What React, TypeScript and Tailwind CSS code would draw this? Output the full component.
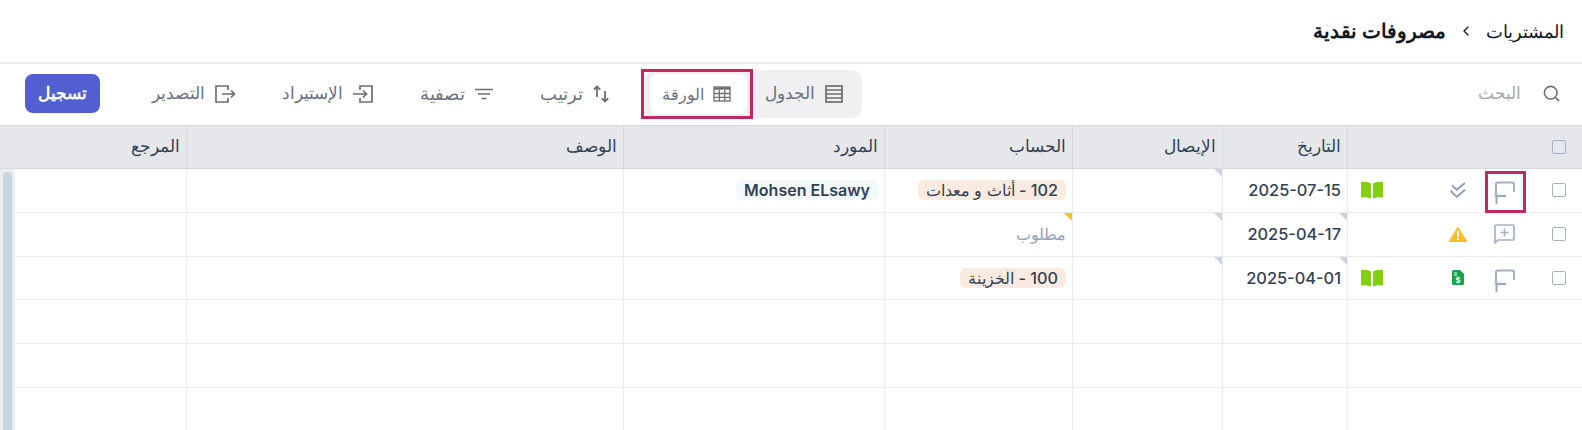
import { Search, ChevronLeft } from "lucide-react";

const cols = "grid grid-cols-[235px_125px_150px_188px_261px_437px_1fr]";
const headers = ["", "التاريخ", "الإيصال", "الحساب", "المورد", "الوصف", "المرجع"];

function Corner({ color = "border-t-[#cbd5e1]" }: { color?: string }) {
  return <span className={`absolute top-0 right-0 h-0 w-0 border-t-[8px] border-l-[8px] border-l-transparent ${color}`} />;
}

function Checkbox() {
  return <span className="block h-[14px] w-[14px] shrink-0 rounded-[2px] border-[1.5px] border-[#a3b1c6]" />;
}

function CommentIcon() {
  return (
    <svg className="mt-[6px]" width="21" height="24" viewBox="0 0 21 24" fill="none" stroke="#a3b1c6" strokeWidth="2">
      <path d="M2 15V3a1.500 1.500 0 0 1 1.500-1.500h15a1.500 1.500 0 0 1 1.500 1.500v8" />
      <path d="M2 15h10" strokeWidth="2.200" stroke="#9aa9bf" />
      <path d="M2.500 15v8" strokeWidth="2" stroke="#9aa9bf" />
      <path d="M0 15h1.500" stroke="#e5b5b5" strokeWidth="1.500" />
    </svg>
  );
}

function AddCommentIcon() {
  return (
    <svg width="21" height="20" viewBox="0 0 21 20" fill="none" stroke="#a3b1c6" strokeWidth="1.700">
      <path d="M1 19V2a1 1 0 0 1 1-1h17a1 1 0 0 1 1 1v13a1 1 0 0 1-1 1H4z" strokeLinejoin="round" />
      <path d="M10.500 4.500v8M6.500 8.500h8" />
    </svg>
  );
}

function BookIcon() {
  return (
    <svg width="24" height="18" viewBox="0 0 24 18" fill="#84cf12">
      <path d="M11 2.500C9 1 5 .5 1 1v15.500c4-.5 8 0 10 1.300z" />
      <path d="M13 2.500C15 1 19 .5 23 1v15.500c-4-.5-8 0-10 1.300z" />
    </svg>
  );
}

function DoubleCheck() {
  return (
    <svg width="16" height="16" viewBox="0 0 16 16" fill="none" stroke="#8a9bb8" strokeWidth="1.800">
      <path d="M2 3.300l4.700 4.400L15 1" />
      <path d="M.5 8.700l6.200 6.200L15 7.700" />
    </svg>
  );
}

function Warning() {
  return (
    <svg width="20" height="16" viewBox="0 0 20 16">
      <path d="M10 .5 19.600 16H.4z" fill="#fbbf24" />
      <rect x="9" y="5" width="2" height="6" fill="#fff" />
      <rect x="9" y="12" width="2" height="2" fill="#fff" />
    </svg>
  );
}

function MoneyDoc() {
  return (
    <svg width="12" height="15" viewBox="0 0 12 15">
      <path d="M1.500 0H8l4 4v9.500a1.500 1.500 0 0 1-1.500 1.500h-9A1.500 1.500 0 0 1 0 13.500v-12A1.500 1.500 0 0 1 1.500 0z" fill="#16a34a" />
      <text x="6" y="12.500" fontSize="7.500" fontWeight="700" textAnchor="middle" fill="#fff" fontFamily="Inter">$</text>
      <path d="M2 3h3M2 5h3" stroke="#fff" strokeWidth="1" />
    </svg>
  );
}

function RowsIcon() {
  return (
    <svg width="18" height="18" viewBox="0 0 18 18" fill="none" stroke="#6e6e6e" strokeWidth="1.700">
      <rect x="1" y="1" width="16" height="16" />
      <path d="M1 5h16M1 9h16M1 13h16" />
    </svg>
  );
}

function SheetIcon() {
  return (
    <svg width="18" height="16" viewBox="0 0 18 16" fill="none" stroke="#6e6e6e" strokeWidth="1.300">
      <rect x="1" y="1" width="16" height="14" />
      <path d="M1 2.500h16" strokeWidth="2.400" />
      <path d="M1 7.500h16M1 11.300h16M6.300 4v11M11.700 4v11" />
    </svg>
  );
}

function SortIcon() {
  return (
    <svg width="16" height="18" viewBox="0 0 16 18" fill="none" stroke="#6e6e6e" strokeWidth="1.800">
      <path d="M4 12V1.500M.8 4.700 4 1.500l3.200 3.200" />
      <path d="M12 6v10.500M8.800 13.300l3.200 3.200 3.200-3.200" />
    </svg>
  );
}

function ImportIcon() {
  return (
    <svg width="20" height="18" viewBox="0 0 20 18" fill="none" stroke="#6e6e6e" strokeWidth="1.700">
      <path d="M7 5V1h12v16H7v-4" />
      <path d="M0 9h13M10 5.500 13.500 9 10 12.500" />
    </svg>
  );
}

function ExportIcon() {
  return (
    <svg width="20" height="18" viewBox="0 0 20 18" fill="none" stroke="#6e6e6e" strokeWidth="1.700">
      <path d="M13 5V1H1v16h12v-4" />
      <path d="M7 9h12M16 5.500 19.500 9 16 12.500" />
    </svg>
  );
}

function Filter() {
  return (
    <svg width="18" height="12" viewBox="0 0 18 12" fill="none" stroke="#6e6e6e" strokeWidth="1.600">
      <path d="M0 1.500h18M3 6h12M6.500 10.500h5" />
    </svg>
  );
}

function Action({ icon, label, className }: { icon: React.ReactNode; label: string; className: string }) {
  return (
    <div className={`flex items-center gap-[10px] text-[#6b7280] ${className}`}>
      {icon}
      <span>{label}</span>
    </div>
  );
}

function Pill({ text, tone }: { text: string; tone: string }) {
  return <span className={`inline-block h-5 rounded-[6px] px-2 leading-5 text-[#334155] ${tone}`}>{text}</span>;
}

const rows = [
  { date: "2025-07-15", first: true, icons: [<CommentIcon />, <DoubleCheck />, <BookIcon />], account: "102 - أثاث و معدات", supplier: "Mohsen ELsawy" },
  { date: "2025-04-17", icons: [<AddCommentIcon />, <Warning />, null], required: true },
  { date: "2025-04-01", icons: [<CommentIcon />, <MoneyDoc />, <BookIcon />], account: "100 - الخزينة" },
  { date: "" },
  { date: "" },
  { date: "" },
];

export default function App() {
  return (
    <div dir="rtl" className="relative h-[430px] w-[1582px] overflow-hidden bg-white font-['Inter','Noto_Sans',sans-serif]">
      <div className="flex h-[62px] items-center gap-[12px] pr-[18px] text-[#111827]">
        <span className="text-[18px]">المشتريات</span>
        <ChevronLeft size={16} strokeWidth={2} />
        <span className="text-[20px] font-semibold">مصروفات نقدية</span>
      </div>

      <div className="flex h-[63px] items-center border-t-2 border-[#eceef2] pr-[21px] pb-[2px] pl-[25px]">
        <div className="flex w-[100px] shrink-0 items-center gap-[21px] text-[17px] text-[#a3a7ae]">
          <Search size={19} strokeWidth={2} className="text-[#6e6e6e]" />
          <span>البحث</span>
        </div>
        <div className="mr-[599px] flex h-[48px] w-[217px] items-center rounded-[10px] bg-[#f0f0f2] pr-[19px] pl-[5px]">
          <div className="flex w-[96px] items-center gap-[10px] text-[17px] text-[#6b7280]">
            <RowsIcon />
            <span>الجدول</span>
          </div>
          <div className="flex h-10 flex-1 items-center justify-center gap-[9px] rounded-[8px] bg-white pr-[4px] text-[16px] text-[#6b7280]">
            <SheetIcon />
            <span>الورقة</span>
          </div>
        </div>
        <Action className="mr-[36px] text-[18px]" icon={<SortIcon />} label="ترتيب" />
        <Action className="mr-[47px] text-[18px]" icon={<Filter />} label="تصفية" />
        <Action className="mr-[47px] text-[17px]" icon={<ImportIcon />} label="الإستيراد" />
        <Action className="mr-[47px] text-[17px]" icon={<ExportIcon />} label="التصدير" />
        <button className="mr-auto flex h-[39px] w-[75px] items-center justify-center rounded-[8px] bg-[#515fd1] text-[16.5px] font-bold text-white">تسجيل</button>
      </div>

      <div className={`${cols} h-[44px] border-y border-[#d5d8de] bg-[#e5e7eb]`}>
        {headers.map((h, i) => (
          <div key={i} className={`flex items-center px-[6px] text-[17px] font-medium text-[#334155] ${i < 6 ? "border-l border-[#d5d8de]" : ""}`}>
            {i === 0 ? (
              <div className="flex w-full items-center pr-[10px]"><Checkbox /></div>
            ) : h}
          </div>
        ))}
      </div>

      <div className="flex">
        <div className="flex-1">
          {rows.map((r, i) => (
            <div key={i} className={`${cols} h-[43.75px] border-b border-[#ececee]`}>
              <div className="flex items-center border-l border-[#ececee] pr-4">
                {r.date && <Checkbox />}
                <div className="mr-[37px] flex w-[21px] justify-center">{r.icons?.[0]}</div>
                <div className="mr-[26px] flex w-[20px] justify-center">{r.icons?.[1]}</div>
                <div className="mr-[64px] flex w-[24px] justify-center">{r.icons?.[2]}</div>
              </div>
              <div className="relative flex items-center border-l border-[#ececee] pr-[6px] text-[16.4px] font-medium text-[#334155]">
                {r.date && !r.first && <Corner />}
                {r.date}
              </div>
              <div className="relative border-l border-[#ececee]">{r.date && <Corner />}</div>
              <div className="relative flex items-center border-l border-[#ececee] pr-[6px]">
                {r.required && <Corner color="border-t-[#fbbf24]" />}
                {r.required && <span className="text-[16.4px] text-[#94a3b8]">مطلوب</span>}
                {r.account && <Pill text={r.account} tone="bg-[#f9ebe0] text-[16.25px] font-medium" />}
              </div>
              <div className="flex items-center border-l border-[#ececee] pr-[6px]">
                {r.supplier && <Pill text={r.supplier} tone="bg-[#f3f8fb] text-[16px] font-semibold" />}
              </div>
              <div className="border-l border-[#ececee]" />
              <div />
            </div>
          ))}
        </div>
        <div className="flex h-[262px] w-[15px] shrink-0 justify-end bg-[#ecedee]">
          <div className="mt-[3px] ml-[3px] h-full w-[9px] rounded-t-[4px] bg-[#cbd5e1]" />
        </div>
      </div>

      <div className="absolute top-[69px] left-[641px] h-[50px] w-[112px] border-[3px] border-[#c4265f]" />
      <div className="absolute top-[171px] left-[1485px] h-[42px] w-[41px] border-[3px] border-[#c4265f]" />
    </div>
  );
}
